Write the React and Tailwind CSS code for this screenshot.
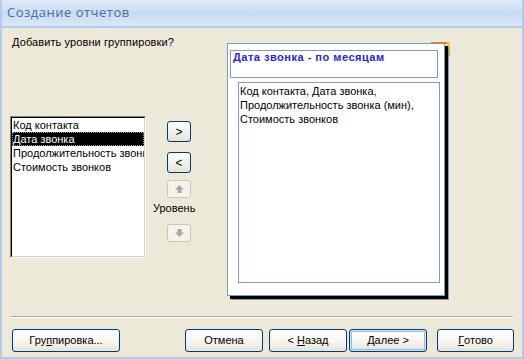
const FONT = "font-['Liberation_Sans',Arial,sans-serif]";

const FIELDS = ["Код контакта", "Дата звонка", "Продолжительность звонка (мин)", "Стоимость звонков"];

function XpButton({ children, className = "", isDefault = false }) {
  return (
    <div
      className={`h-[23px] rounded-[3px] border border-[#003c74] bg-gradient-to-b from-white via-[#f7f6f1] to-[#e6e4d8] flex items-center justify-center text-[11px] text-black ${
        isDefault ? "shadow-[inset_0_0_0_1px_#cee7ff,inset_0_0_0_2px_#98b8ea]" : ""
      } ${className}`}
    >
      {children}
    </div>
  );
}

function SmallButton({ children, disabled = false, className = "" }) {
  return (
    <div
      className={`w-[24px] rounded-[3px] border flex items-center justify-center text-[12px] leading-none ${
        disabled
          ? "border-[#c9c7ba] bg-[#f5f4ea] text-[#aca899]"
          : "border-[#003c74] bg-gradient-to-b from-white to-[#e6e4d8] text-black"
      } ${className}`}
    >
      {children}
    </div>
  );
}

function Arrow({ down = false }) {
  return (
    <svg width="9" height="8" viewBox="0 0 9 8" className={down ? "rotate-180" : ""}>
      <path d="M4.5 0 L9 4.5 H6.5 V8 H2.5 V4.5 H0 Z" fill="#aca899" />
    </svg>
  );
}

export default function App() {
  return (
    <div className={`w-[524px] h-[359px] flex flex-col bg-[#ece9d8] border-x-2 border-b-2 border-[#b3cbed] overflow-hidden ${FONT}`}>
      {/* title bar */}
      <div className="h-[28px] shrink-0 flex items-center pl-[5px] border-b-2 border-[#b0cbee] bg-gradient-to-b from-[#e3ecf8] via-[#c8daf3] to-[#dbe7f7]">
        <span className="text-[13px] text-[#4f6d9a] font-['Open_Sans',sans-serif] tracking-[0.5px]">Создание отчетов</span>
      </div>

      {/* main */}
      <div className="h-[288px] shrink-0 flex">
        <div className="w-[225px] shrink-0 flex flex-col">
          <div className="mt-[8px] pl-[10px] text-[11px] leading-[13px] text-black tracking-[0.1px]">Добавить уровни группировки?</div>
          <div className="mt-[67px] ml-[8px] flex">
            {/* list */}
            <div className="w-[136px] h-[142px] border border-t-[#808080] border-l-[#808080] border-r-white border-b-white">
              <div className="w-full h-full border border-t-black border-l-black border-r-[#d4d0c8] border-b-[#d4d0c8] bg-white overflow-hidden">
                {FIELDS.map((f, i) => (
                  <div
                    key={f}
                    className={`h-[14px] leading-[14px] pl-[1px] text-[11px] whitespace-nowrap overflow-hidden ${
                      i === 1 ? "bg-black text-white outline-1 outline-dotted outline-[#9a9a9a] -outline-offset-1" : "text-black"
                    }`}
                  >
                    {f}
                  </div>
                ))}
              </div>
            </div>
            {/* level buttons */}
            <div className="ml-[7px] pt-[5px] flex flex-col items-start">
              <SmallButton className="ml-[14px] h-[21px]">&gt;</SmallButton>
              <SmallButton className="ml-[14px] mt-[10px] h-[21px]">&lt;</SmallButton>
              <SmallButton disabled className="ml-[14px] mt-[7px] h-[18px]">
                <Arrow />
              </SmallButton>
              <div className="mt-[3px] text-[11px] leading-[14px] text-black">Уровень</div>
              <SmallButton disabled className="ml-[14px] mt-[9px] h-[18px]">
                <Arrow down />
              </SmallButton>
            </div>
          </div>
        </div>

        {/* preview */}
        <div className="relative mt-[15px] w-[218px] h-[253px]">
          <div className="absolute top-[-1px] left-[204px] w-[19px] h-[2px] bg-[#f07818]" />
          <div className="absolute top-[-1px] left-[220px] w-[3px] h-[14px] bg-gradient-to-b from-[#ffd23c] to-[#f08a1c]" />
          <div className="relative w-full h-full border border-[#7f9db9] bg-white shadow-[3px_3px_0_0_#000,4px_4px_0_0_#7f9db9] flex flex-col">
            <div className="ml-[2px] mt-[6px] w-[208px] h-[28px] border border-[#7f9db9] pl-[2px]">
              <div className="text-[11px] leading-[13px] font-bold text-[#2424f0] tracking-[0.5px]">Дата звонка - по месяцам</div>
            </div>
            <div className="ml-[10px] mt-[4px] w-[202px] h-[201px] border border-[#7f9db9] pl-[1px] pt-[1px] text-[11px] leading-[14px] text-black">
              <div>Код контакта, Дата звонка,</div>
              <div>Продолжительность звонка (мин),</div>
              <div>Стоимость звонков</div>
            </div>
          </div>
        </div>
      </div>

      {/* separator */}
      <div className="mx-[9px] h-[2px] border-t border-[#aca899] border-b border-b-white" />

      {/* footer */}
      <div className="mt-[11px] flex pr-[8px]">
        <XpButton className="ml-[10px] w-[108px]">
          Гру<span className="underline">п</span>пировка...
        </XpButton>
        <XpButton className="ml-auto w-[78px]">Отмена</XpButton>
        <XpButton className="ml-[6px] w-[78px]">
          &lt; <span className="underline ml-[3px]">Н</span>азад
        </XpButton>
        <XpButton isDefault className="ml-[2px] w-[78px]">
          <span className="underline">Д</span>алее &gt;
        </XpButton>
        <XpButton className="ml-[10px] w-[77px]">
          <span className="underline">Г</span>отово
        </XpButton>
      </div>
    </div>
  );
}
